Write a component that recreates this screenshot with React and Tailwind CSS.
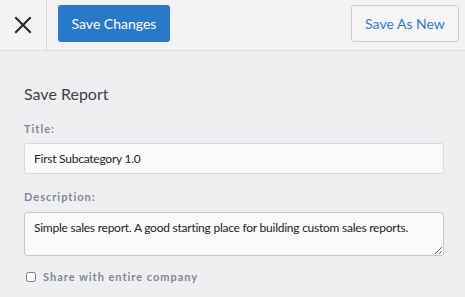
import React from "react";

export default function App() {
  return (
    <div className="w-[465px] h-[297px] bg-[#efeff1] font-['Lato',sans-serif] overflow-hidden">
      {/* header */}
      <div className="h-[51px] bg-[#f3f3f5] border-b border-[#dcdce0] flex items-center">
        <button className="w-[47px] h-full border-r border-[#d8d8dc] flex items-center justify-center">
          <svg width="18" height="18" viewBox="0 0 18 18" fill="none" stroke="#222" strokeWidth="2" strokeLinecap="square">
            <path d="M2 2l14 14M16 2L2 16" />
          </svg>
        </button>
        <button className="ml-[11px] h-[37px] w-[112px] rounded-[3px] bg-[#2979c8] text-white text-[14px] mt-[-4px]">
          Save Changes
        </button>
        <button className="ml-auto mr-[6px] h-[37px] w-[108px] rounded-[3px] border border-[#cfcfd3] bg-[#f5f5f7] text-[#2f7bc8] text-[14px] mt-[-4px]">
          Save As New
        </button>
      </div>

      {/* body */}
      <div className="px-[24px] pt-[33px]">
        <h2 className="text-[16px] text-[#3d4148] leading-[20px]">Save Report</h2>
        <label className="block mt-[18px] text-[11px] font-bold tracking-[0.09em] text-[#7c879b] leading-[14px]">Title:</label>
        <input
          className="mt-[7px] w-[420px] h-[31px] rounded-[3px] border border-[#d3dce6] bg-[#fafafa] px-[9px] text-[12px] tracking-[-0.02em] text-[#222] outline-none"
          defaultValue="First Subcategory 1.0"
        />
        <label className="block mt-[16px] text-[11px] font-bold tracking-[0.09em] text-[#7c879b] leading-[14px]">Description:</label>
        <textarea
          className="mt-[8px] block w-[420px] h-[44px] rounded-[3px] border border-[#c8c8cc] bg-[#fafafa] px-[9px] pt-[7px] text-[12px] tracking-[-0.02em] text-[#222] outline-none resize-y leading-[16px]"
          defaultValue="Simple sales report. A good starting place for building custom sales reports."
        />
        <label className="mt-[13px] flex items-center gap-[7px] pl-[2px]">
          <input type="checkbox" className="w-[10px] h-[10px] m-0" />
          <span className="text-[11px] font-bold tracking-[0.09em] text-[#7c879b] leading-[16px]">Share with entire company</span>
        </label>
      </div>
    </div>
  );
}
